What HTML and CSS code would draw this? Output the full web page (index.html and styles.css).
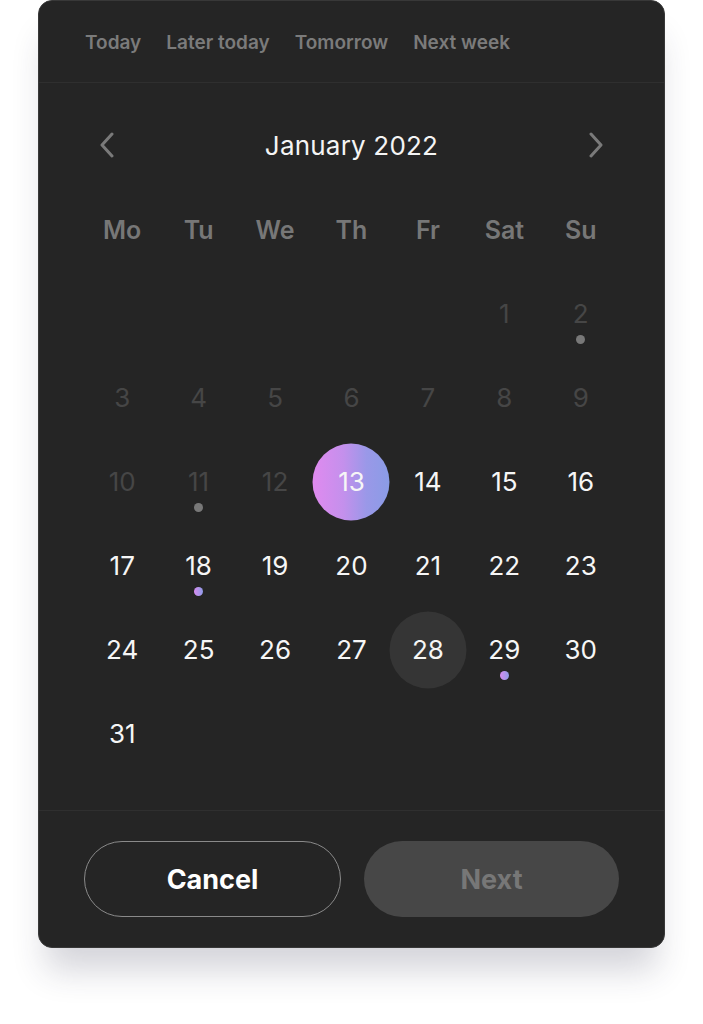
FILE: index.html
```html
<!DOCTYPE html>
<html>
<head>
<meta charset="utf-8">
<link rel="stylesheet" href="styles.css">
</head>
<body>
<div class="page">
<div class="card">
  <nav class="tabs">
    <span class="tab">Today</span>
    <span class="tab">Later today</span>
    <span class="tab">Tomorrow</span>
    <span class="tab">Next week</span>
  </nav>
  <section class="calendar">
    <div class="header">
      <svg class="chev" width="16" height="26" viewBox="0 0 16 26"><path d="M13 2 L3 13 L13 24" fill="none" stroke="#7a7a7a" stroke-width="3" stroke-linecap="round" stroke-linejoin="round"/></svg>
      <div class="title">January 2022</div>
      <svg class="chev" width="16" height="26" viewBox="0 0 16 26"><path d="M3 2 L13 13 L3 24" fill="none" stroke="#7a7a7a" stroke-width="3" stroke-linecap="round" stroke-linejoin="round"/></svg>
    </div>
    <div class="grid weekdays">
      <div class="wd">Mo</div><div class="wd">Tu</div><div class="wd">We</div><div class="wd">Th</div><div class="wd">Fr</div><div class="wd">Sat</div><div class="wd">Su</div>
    </div>
    <div class="grid days">
      <div class="day"></div><div class="day"></div><div class="day"></div><div class="day"></div><div class="day"></div>
      <div class="day off"><span class="n">1</span></div>
      <div class="day off"><span class="n">2</span><i class="dot gray"></i></div>
      <div class="day off"><span class="n">3</span></div>
      <div class="day off"><span class="n">4</span></div>
      <div class="day off"><span class="n">5</span></div>
      <div class="day off"><span class="n">6</span></div>
      <div class="day off"><span class="n">7</span></div>
      <div class="day off"><span class="n">8</span></div>
      <div class="day off"><span class="n">9</span></div>
      <div class="day off"><span class="n">10</span></div>
      <div class="day off"><span class="n">11</span><i class="dot gray"></i></div>
      <div class="day off"><span class="n">12</span></div>
      <div class="day selected"><span class="n">13</span></div>
      <div class="day"><span class="n">14</span></div>
      <div class="day"><span class="n">15</span></div>
      <div class="day"><span class="n">16</span></div>
      <div class="day"><span class="n">17</span></div>
      <div class="day"><span class="n">18</span><i class="dot color"></i></div>
      <div class="day"><span class="n">19</span></div>
      <div class="day"><span class="n">20</span></div>
      <div class="day"><span class="n">21</span></div>
      <div class="day"><span class="n">22</span></div>
      <div class="day"><span class="n">23</span></div>
      <div class="day"><span class="n">24</span></div>
      <div class="day"><span class="n">25</span></div>
      <div class="day"><span class="n">26</span></div>
      <div class="day"><span class="n">27</span></div>
      <div class="day hover"><span class="n">28</span></div>
      <div class="day"><span class="n">29</span><i class="dot color"></i></div>
      <div class="day"><span class="n">30</span></div>
      <div class="day"><span class="n">31</span></div>
    </div>
  </section>
  <footer class="footer">
    <button class="btn cancel">Cancel</button>
    <button class="btn next">Next</button>
  </footer>
</div>
</div>
</body>
</html>
```
FILE: styles.css
```css
* { box-sizing: border-box; }
html, body { margin: 0; padding: 0; background: #ffffff; }
body { font-family: Inter, "Noto Sans", sans-serif; }

.page {
  min-height: 1024px;
  padding: 0 0 0 38px;
}

.card {
  width: 627px;
  background: #252525;
  border: 1px solid #383838;
  border-radius: 14px;
  box-shadow: 0 30px 34px -8px rgba(40, 40, 70, 0.2);
  overflow: hidden;
}

.tabs {
  height: 82px;
  display: flex;
  align-items: center;
  gap: 25px;
  padding: 2px 0 0 46px;
  border-bottom: 1px solid #2f2f2f;
}
.tab {
  font-size: 19px;
  font-weight: 600;
  color: #7b7b7b;
  letter-spacing: 0;
}

.calendar {
  padding: 38px 45px 34px 45px;
  border-bottom: 1px solid #2f2f2f;
}
.header {
  height: 48px;
  display: flex;
  align-items: center;
  justify-content: space-between;
  padding: 0 15px;
  margin-bottom: 19px;
}
.chev { display: block; }
.title {
  font-size: 26px;
  font-weight: 400;
  color: #f4f4f4;
  letter-spacing: 0.2px;
}

.grid {
  display: grid;
  grid-template-columns: repeat(7, 1fr);
}
.wd {
  height: 84px;
  display: flex;
  align-items: center;
  justify-content: center;
  font-size: 25px;
  font-weight: 600;
  color: #777777;
}
.day {
  height: 84px;
  position: relative;
  display: flex;
  align-items: center;
  justify-content: center;
}
.n {
  position: relative;
  z-index: 1;
  font-size: 26px;
  font-weight: 400;
  color: #f6f6f6;
  line-height: 1;
}
.day.off .n { color: #464646; }
.day.selected::before,
.day.hover::before {
  content: "";
  position: absolute;
  width: 77px;
  height: 77px;
  border-radius: 50%;
  left: 50%;
  top: 50%;
  transform: translate(-50%, -50%);
}
.day.selected::before {
  background: linear-gradient(90deg, #e08aef 0%, #c490ec 40%, #9a98e8 70%, #8a9ce6 100%);
}
.day.hover::before { background: #353535; }
.dot {
  position: absolute;
  width: 9px;
  height: 9px;
  border-radius: 50%;
  left: 50%;
  top: 50%;
  margin-left: -4.5px;
  margin-top: 20.5px;
}
.dot.gray { background: #787878; }
.dot.color { background: linear-gradient(90deg, #d78cf0, #8f9ce8); }

.footer {
  display: flex;
  gap: 23px;
  padding: 30px 45px 30px 45px;
}
.btn {
  flex: 1;
  height: 76px;
  border-radius: 38px;
  font-family: Inter, "Noto Sans", sans-serif;
  font-size: 27px;
  font-weight: 700;
  cursor: pointer;
}
.cancel {
  background: transparent;
  border: 1.5px solid #8a8a8a;
  color: #ffffff;
}
.next {
  background: #474747;
  border: none;
  color: #777777;
}
```
